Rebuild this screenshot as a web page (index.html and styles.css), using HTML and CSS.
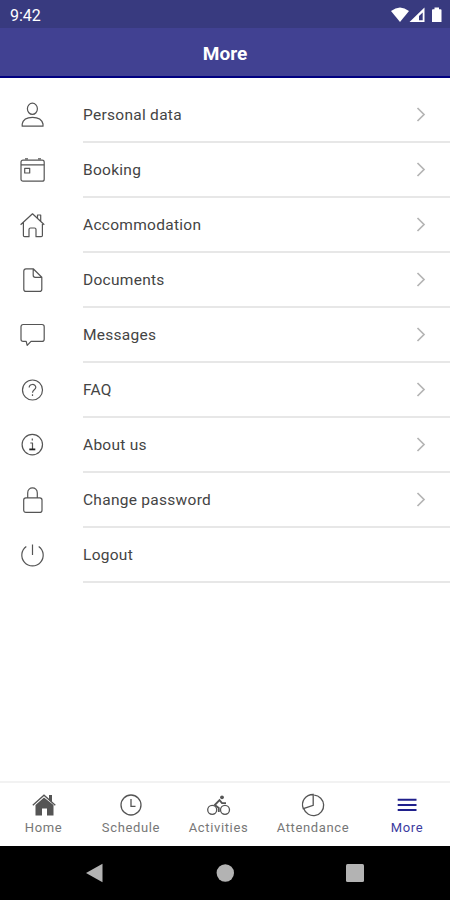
FILE: index.html
```html
<!DOCTYPE html>
<html lang="en">
<head>
<meta charset="utf-8">
<title>More</title>
<link rel="stylesheet" href="styles.css">
</head>
<body>
<div class="screen">
  <div class="status">
    <span class="time">9:42</span>
    <svg class="status-icons" width="52" height="16" viewBox="0 0 52 16">
      <path d="M0 4Q9 -3 18 4L9 15Z"/>
      <path fill-rule="evenodd" d="M33.500 0.500V15H18.500ZM31.700 5.500L28 9V13.300H31.700Z"/>
      <path d="M41 3Q41 2.200 42 2.200H43.500V0.500H48V2.200H49.500Q50.500 2.200 50.500 3V15H41Z"/>
    </svg>
  </div>
  <header class="header"><h1>More</h1></header>
  <main class="list">
    <a class="row">
      <svg class="icon" viewBox="0 0 28 28"><ellipse cx="14.4" cy="7.8" rx="5" ry="5.6"/><path d="M4.2 25.2V23C5 18.500 9 16.300 14.500 16.300S24 18.500 25 23V25.200Z"/></svg>
      <span class="label">Personal data</span>
      <svg class="chev" viewBox="0 0 10 16"><path d="M1.500 1.500L8 8L1.500 14.500"/></svg>
    </a>
    <a class="row">
      <svg class="icon" viewBox="0 0 28 28"><rect x="3" y="4.200" width="23.200" height="21" rx="2"/><path d="M3 8.800H26.200M7 2.800H10M20 2.800H23"/><rect x="6.700" y="12.300" width="5" height="4.700"/></svg>
      <span class="label">Booking</span>
      <svg class="chev" viewBox="0 0 10 16"><path d="M1.500 1.500L8 8L1.500 14.500"/></svg>
    </a>
    <a class="row">
      <svg class="icon" viewBox="0 0 28 28"><path d="M2.600 13.700L14.500 2.800L26.300 13.700M5.400 11.500V24.500Q5.400 25.700 6.600 25.700H11V18.500Q11 17 12.500 17H16.500Q18 17 18 18.500V25.700H23.200Q24.400 25.700 24.400 24.500V11.500M19.500 7V4H22.700V10"/></svg>
      <span class="label">Accommodation</span>
      <svg class="chev" viewBox="0 0 10 16"><path d="M1.500 1.500L8 8L1.500 14.500"/></svg>
    </a>
    <a class="row">
      <svg class="icon" viewBox="0 0 28 28"><path d="M15.200 2.800H8Q5.800 2.800 5.800 5V23.200Q5.800 25.400 8 25.400H21.600Q23.800 25.400 23.800 23.200V11.300ZM15.200 2.800V9.300Q15.200 11.300 17.200 11.300H23.800"/></svg>
      <span class="label">Documents</span>
      <svg class="chev" viewBox="0 0 10 16"><path d="M1.500 1.500L8 8L1.500 14.500"/></svg>
    </a>
    <a class="row">
      <svg class="icon" viewBox="0 0 28 28"><path d="M5.200 3.500H24Q26.200 3.500 26.200 5.700V18.200Q26.200 20.400 24 20.400H13L9.200 24.400L8.200 20.400H5.200Q3 20.400 3 18.200V5.700Q3 3.500 5.200 3.500Z"/></svg>
      <span class="label">Messages</span>
      <svg class="chev" viewBox="0 0 10 16"><path d="M1.500 1.500L8 8L1.500 14.500"/></svg>
    </a>
    <a class="row">
      <svg class="icon" viewBox="0 0 28 28"><circle cx="14.500" cy="14" r="10"/><path d="M11.200 11.500C11.200 7.500 17.800 7.500 17.800 11.300C17.800 13.800 14.500 13.800 14.500 16.700M14.500 18.300V20"/></svg>
      <span class="label">FAQ</span>
      <svg class="chev" viewBox="0 0 10 16"><path d="M1.500 1.500L8 8L1.500 14.500"/></svg>
    </a>
    <a class="row">
      <svg class="icon" viewBox="0 0 28 28"><circle cx="14.300" cy="13.600" r="10.200"/><path d="M14.300 7.500V9.500M12.300 12H14.500V18"/><path class="heavy" d="M11.300 18.400H17.300"/></svg>
      <span class="label">About us</span>
      <svg class="chev" viewBox="0 0 10 16"><path d="M1.500 1.500L8 8L1.500 14.500"/></svg>
    </a>
    <a class="row">
      <svg class="icon" viewBox="0 0 28 28"><rect x="5.700" y="11.900" width="18.300" height="14.500" rx="2.200"/><path d="M9.700 11.900V7C9.700 0.200 19.300 0.200 19.300 7V11.900"/></svg>
      <span class="label">Change password</span>
      <svg class="chev" viewBox="0 0 10 16"><path d="M1.500 1.500L8 8L1.500 14.500"/></svg>
    </a>
    <a class="row">
      <svg class="icon" viewBox="0 0 28 28"><path d="M8.300 5.500A10.700 10.700 0 1 0 20.700 5.500M14.500 3.500V14"/></svg>
      <span class="label">Logout</span>
    </a>
  </main>
  <nav class="tabs">
    <a class="tab">
      <svg class="tab-icon" viewBox="0 0 26 24"><path class="solid" d="M4.500 12L13 4.500L22.500 12V22.500H16V15.500H11V22.500H4.500ZM18 2H21V9.500L18 7Z"/><path d="M1.800 12.300L13 2.200L24.300 12.300"/></svg>
      <span>Home</span>
    </a>
    <a class="tab">
      <svg class="tab-icon" viewBox="0 0 26 24"><circle cx="13" cy="12" r="10"/><path d="M13 6V13.300H17.500"/></svg>
      <span>Schedule</span>
    </a>
    <a class="tab">
      <svg class="tab-icon" viewBox="0 0 26 24"><circle cx="6.200" cy="16.800" r="4.500"/><circle cx="19" cy="16.800" r="4.500"/><path class="bold" d="M12.800 19V15L8.800 12L13.500 7.200L16 10.200H20"/><circle class="solid" cx="16" cy="4.300" r="1.900"/></svg>
      <span>Activities</span>
    </a>
    <a class="tab">
      <svg class="tab-icon" viewBox="0 0 26 24"><path d="M14.200 2.200A10.200 10.200 0 1 1 3.800 15.700"/><path d="M13.200 1.500V12.300L3.300 15.700C0.500 8.500 5.500 1.500 13.200 1.500Z"/></svg>
      <span>Attendance</span>
    </a>
    <a class="tab active">
      <svg class="tab-icon" viewBox="0 0 26 24"><path class="bars" d="M3.700 6.700H22.500M3.700 11.900H22.500M3.700 17.100H22.500"/></svg>
      <span>More</span>
    </a>
  </nav>
  <div class="system">
    <svg viewBox="0 0 18 20"><path d="M16.500 0.800V19.200L0 10Z"/></svg>
    <svg viewBox="0 0 18 20"><circle cx="9.300" cy="10" r="8.700"/></svg>
    <svg viewBox="0 0 18 20"><rect y="1" width="18" height="18" rx="1.500"/></svg>
  </div>
</div>
</body>
</html>
```
FILE: styles.css
```css
* { box-sizing: border-box; }
body { margin: 0; font-family: Roboto, "Liberation Sans", sans-serif; background: #fff; }
.screen { width: 450px; height: 900px; display: flex; flex-direction: column; }
.status { height: 28px; flex: none; background: #383a7f; color: #fff; display: flex; align-items: center; justify-content: space-between; padding: 1px 7px 0 10px; }
.time { font-size: 16px; line-height: 26px; padding-top: 2px; }
.status-icons { fill: #fff; }
.header { height: 50px; flex: none; background: #414192; border-bottom: 2px solid #000080; display: flex; align-items: center; justify-content: center; padding-top: 4px; }
h1 { margin: 0; font-size: 19px; line-height: 24px; font-weight: 700; color: #fff; }
.list { flex: 1; padding-top: 10px; }
.row { height: 55px; display: flex; padding-left: 18px; }
.icon { width: 28px; height: 28px; margin: 13px 37px 0 0; flex: none; fill: none; stroke: #555; stroke-width: 1.200; stroke-linejoin: round; }
.icon .heavy { stroke: #222; stroke-width: 1.800; }
.label { flex: 1; border-bottom: 2px solid #e7e7e7; font-size: 15.500px; line-height: 54px; letter-spacing: 0.280px; color: #444; height: 55px; }
.chev { width: 34px; height: 55px; padding: 1px 24px 1px 0; border-bottom: 2px solid #e7e7e7; flex: none; fill: none; stroke: #b4b4b4; stroke-width: 1.700; }
.tabs { flex: none; height: 65px; border-top: 2px solid #f2f2f2; display: grid; grid-template-columns: 87px 88px 87px 102px 86px; }
.tab { display: flex; flex-direction: column; align-items: center; padding-top: 10px; font-size: 13px; line-height: 16px; letter-spacing: 0.650px; color: #777; }
.tab span { margin-top: 3px; }
.tab-icon { width: 26px; height: 24px; flex: none; fill: none; stroke: #555; stroke-width: 1.300; }
.tab-icon .solid { fill: #555; stroke: none; }
.tab-icon .bold { stroke-width: 1.800; }
.tab-icon .bars { stroke: #20208c; stroke-width: 2; }
.tab.active { color: #3c3ca0; }
.system { flex: none; height: 54px; background: #000; display: flex; justify-content: space-between; padding: 17px 86px 0; }
.system svg { width: 18px; height: 20px; fill: #b3b3b3; }
```
